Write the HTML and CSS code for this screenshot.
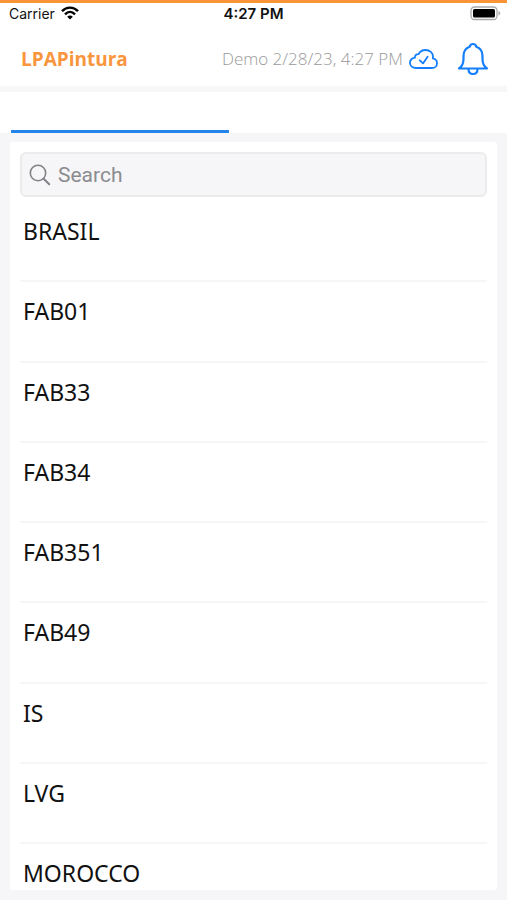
FILE: index.html
```html
<!DOCTYPE html>
<html lang="en">
<head>
<meta charset="utf-8">
<meta name="viewport" content="width=device-width, initial-scale=1">
<title>LPAPintura</title>
<link rel="stylesheet" href="styles.css">
</head>
<body>
<div class="app">
  <div class="status">
    <div class="carrier">
      <span>Carrier</span>
      <svg width="18" height="14" viewBox="0 0 18 14" fill="none" stroke="#000" stroke-width="2.4" aria-hidden="true">
        <path d="M1 5.2C5.600 0.400 12.400 0.400 17 5.200"/>
        <path d="M4 8.300C7 5.300 11 5.300 14 8.300"/>
        <path d="M9 13.500L6.200 10.700C7.800 9.200 10.200 9.200 11.800 10.700Z" fill="#000" stroke="none"/>
      </svg>
    </div>
    <span class="clock">4:27 PM</span>
    <svg class="battery" width="31" height="15" viewBox="0 0 31 15" aria-hidden="true">
      <rect x="1" y="1" width="26" height="12.500" rx="3.500" fill="#fff" stroke="#aaa" stroke-width="1.300"/>
      <rect x="3" y="3" width="22" height="8.500" rx="1.500" fill="#000"/>
      <path d="M28.500 5C30.800 5.700 30.800 8.800 28.500 9.500Z" fill="#aaa"/>
    </svg>
  </div>
  <header class="header">
    <h1 class="brand">LPAPintura</h1>
    <div class="sync">
      <span>Demo 2/28/23, 4:27 PM</span>
      <svg width="29" height="22" viewBox="0 0 29 22" fill="none" stroke="#147efb" stroke-width="1.800" stroke-linecap="round" stroke-linejoin="round" aria-hidden="true">
        <path d="M7 20C3.500 20 1 17.800 1 15C1 12 3 10.200 6 9.700C5.700 7.300 7.300 6 9.600 6.200C10.800 3.500 13.500 2 16.500 2C20.800 2 24 4.800 24 8.700C24 9.400 23.900 10 23.800 10.400C26.300 10.900 28 12.800 28 15.200C28 18 25.900 20 23 20Z"/>
        <path d="M10.800 12.300L14 15.400L18.600 8.800"/>
      </svg>
    </div>
    <button class="bell" type="button" aria-label="Notifications">
      <svg width="32" height="34" viewBox="0 0 32 34" fill="none" stroke="#147efb" stroke-width="2.200" stroke-linecap="round" stroke-linejoin="round" aria-hidden="true">
        <path d="M2 26.500C5 24.500 6.500 21.500 6.500 17V14C6.500 9.500 8.500 6 12.700 4.700C13 3 14.200 2 16 2C17.800 2 19 3 19.300 4.700C23.500 6 25.500 9.500 25.500 14V17C25.500 21.500 27 24.500 30 26.500Z"/>
        <path d="M11.500 27C11.500 30.200 13.300 32 16 32C18.700 32 20.500 30.200 20.500 27"/>
      </svg>
    </button>
  </header>
  <nav class="tabs"><div class="tab"></div></nav>
  <main class="card">
    <label class="search">
      <svg width="22" height="22" viewBox="0 0 22 22" fill="none" stroke="#828287" stroke-width="1.600" stroke-linecap="round" aria-hidden="true">
        <circle cx="9" cy="9" r="7.700"/>
        <path d="M14.700 14.700L20.200 20.200" stroke-width="2"/>
      </svg>
      <input type="search" placeholder="Search" aria-label="Search">
    </label>
    <ul class="list">
      <li>BRASIL</li>
      <li>FAB01</li>
      <li>FAB33</li>
      <li>FAB34</li>
      <li>FAB351</li>
      <li>FAB49</li>
      <li>IS</li>
      <li>LVG</li>
      <li>MOROCCO</li>
    </ul>
  </main>
</div>
</body>
</html>
```
FILE: styles.css
```css
* {
  box-sizing: border-box;
}

body {
  margin: 0;
  background: #f6f6f8;
  color: #111;
  font-family: "Noto Sans", "Open Sans", sans-serif;
}

.app {
  display: flex;
  flex-direction: column;
  min-height: 100vh;
  padding-bottom: 10px;
  border-top: 3px solid #fb9337;
}

.status {
  display: grid;
  grid-template-columns: 1fr auto 1fr;
  align-items: center;
  height: 20px;
  padding: 0 6px;
  background: #fff;
  font-family: Inter, sans-serif;
  font-size: 14px;
}

.carrier {
  display: flex;
  align-items: center;
  gap: 6px;
  padding-left: 3px;
}

.clock {
  font-size: 15px;
  font-weight: 600;
}

.battery {
  justify-self: end;
}

.header {
  display: flex;
  align-items: center;
  height: 69px;
  padding: 8px 18px 0 21px;
  border-bottom: 6px solid #f7f7f7;
  background: #fff;
}

.brand {
  margin: 0 auto 0 0;
  color: #f9953c;
  font-family: "Open Sans", sans-serif;
  font-size: 19px;
  font-weight: 700;
}

.sync {
  display: flex;
  align-items: center;
  gap: 6px;
  color: #999;
  font-family: "Open Sans", sans-serif;
  font-size: 17px;
  font-weight: 300;
  white-space: nowrap;
}

.bell {
  display: flex;
  margin-left: 19px;
  padding: 0;
  border: 0;
  background: none;
}

.tabs {
  display: flex;
  height: 41px;
  padding: 0 11px;
  background: #fff;
}

.tab {
  width: 45%;
  border-bottom: 3px solid #2484ec;
}

.card {
  display: flex;
  flex: 1;
  flex-direction: column;
  margin: 9px 10px 0;
  padding: 10px 10px 0;
  border-radius: 3px;
  background: #fff;
}

.search {
  display: flex;
  align-items: center;
  gap: 7px;
  height: 45px;
  padding: 0 7px;
  border: 2px solid #ebebec;
  border-radius: 6px;
  background: #f6f6f8;
}

.search input {
  flex: 1;
  min-width: 0;
  padding: 0;
  border: 0;
  outline: 0;
  background: none;
  color: #111;
  font-family: Roboto, sans-serif;
  font-size: 21px;
}

.search input::placeholder {
  color: #8b8b8f;
}

.list {
  display: flex;
  flex: 1;
  flex-direction: column;
  margin: 5px 0 0;
  padding: 0;
  list-style: none;
}

.list li {
  flex: 1 0 80px;
  padding: 13px 3px 0;
  border-bottom: 2px solid #f6f6f6;
  font-size: 23px;
  line-height: 32px;
}

.list li:last-child {
  flex: none;
  padding-bottom: 1px;
  border-bottom: 0;
}
```
